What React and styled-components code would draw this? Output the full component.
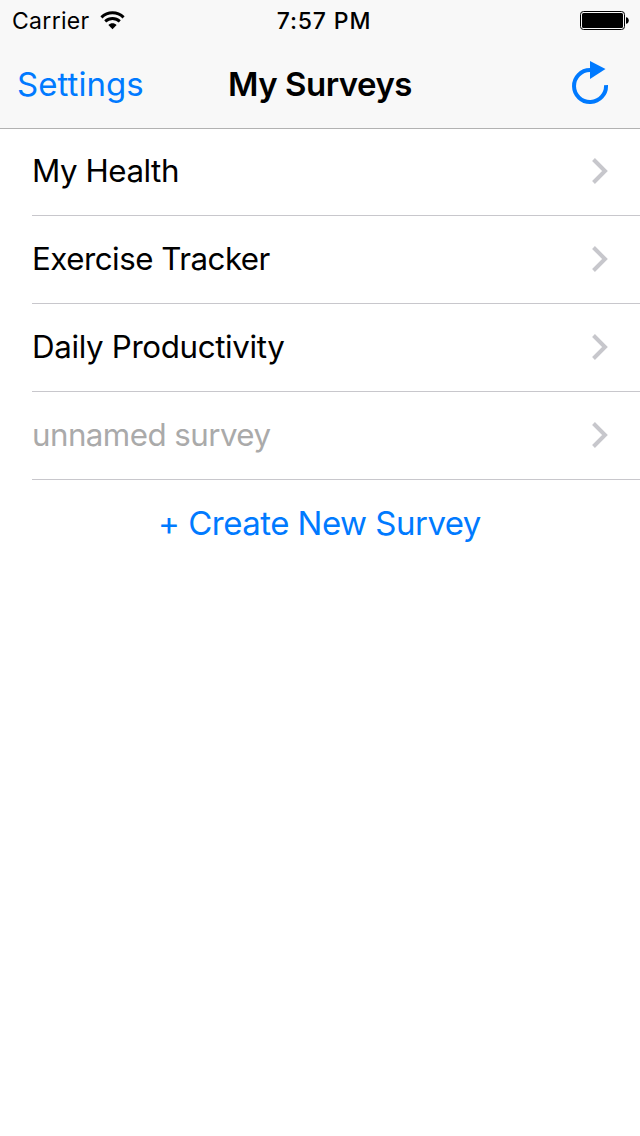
import React from "react";
import styled, { createGlobalStyle } from "styled-components";

const GlobalStyle = createGlobalStyle`
  * { box-sizing: border-box; }
  body {
    margin: 0;
    background: #fff;
    color: #000;
    font-family: Inter, "Liberation Sans", sans-serif;
    font-feature-settings: "calt" 0;
  }
`;

const Screen = styled.div`
  width: 640px;
  height: 1136px;
  background: #fff;
  overflow: hidden;
`;

const Header = styled.header`
  height: 128px;
  background: #f8f8f8;
  box-shadow: 0 1px 0 #b2b2b2;
`;

const StatusBar = styled.div`
  display: grid;
  grid-template-columns: 1fr auto 1fr;
  align-items: center;
  height: 40px;
  padding: 0 11px 0 12px;
`;

const Carrier = styled.div`
  display: flex;
  align-items: center;
  gap: 10px;
  font-size: 23px;
  line-height: 38px;
  letter-spacing: 0.3px;
  padding-top: 2px;
`;

const Clock = styled.div`
  font-size: 23px;
  font-weight: 500;
  line-height: 38px;
  letter-spacing: 0.85px;
  padding: 2px 0 0 7px;
`;

const BatterySlot = styled.div`
  display: flex;
  justify-content: flex-end;
  padding-top: 1px;
`;

const NavBar = styled.nav`
  display: grid;
  grid-template-columns: 1fr auto 1fr;
  align-items: center;
  height: 88px;
  padding: 0 30px 0 17px;
`;

const NavButton = styled.button`
  justify-self: ${(p) => (p.$end ? "end" : "start")};
  display: flex;
  padding: ${(p) => (p.$end ? "0 0 2px" : "0 0 1px")};
  border: 0;
  background: none;
  color: #007aff;
  font: inherit;
  font-size: 33px;
  line-height: 44px;
  letter-spacing: 0.05px;
`;

const Title = styled.h1`
  margin: 0;
  padding: 0 0 1px 13px;
  font-size: 33px;
  font-weight: 600;
  line-height: 44px;
  letter-spacing: -0.5px;
`;

const List = styled.ul`
  margin: 0;
  padding: 0 0 0 32px;
  list-style: none;
`;

const Row = styled.li`
  display: flex;
  align-items: center;
  justify-content: space-between;
  height: 88px;
  padding-right: 31px;
  border-bottom: 1px solid #c8c7cc;
  color: ${(p) => (p.$muted ? "#aaa" : "#000")};
  font-size: 31.3px;
  line-height: 40px;
  letter-spacing: ${(p) => p.$tracking}px;
`;

const SurveyName = styled.span`
  padding-bottom: 2px;
`;

const CreateButton = styled.button`
  display: block;
  width: 100%;
  height: 88px;
  padding: 0 1px 2px 0;
  border: 0;
  background: none;
  color: #007aff;
  font: inherit;
  font-size: 33px;
  letter-spacing: -0.52px;
`;

const surveys = [
  { name: "My Health", tracking: -0.45 },
  { name: "Exercise Tracker", tracking: -0.5 },
  { name: "Daily Productivity", tracking: -0.35 },
  { name: "unnamed survey", tracking: -0.55, muted: true },
];

const WifiIcon = () => (
  <svg width="25" height="21" viewBox="0 0 25 21" fill="none" stroke="#000">
    <path d="M1.4 6.3C7.8 .3 17.2 .3 23.6 6.3" strokeWidth="3" />
    <path d="M5.2 10.4C9.4 6.5 15.6 6.5 19.8 10.4" strokeWidth="2.8" />
    <path d="M8.4 14C10.7 11.5 14.3 11.5 16.6 14L12.5 18.2Z" fill="#000" stroke="none" />
  </svg>
);

const BatteryIcon = () => (
  <svg width="49" height="20" viewBox="0 0 49 20">
    <rect x="0.5" y="0.5" width="44" height="18" rx="3" fill="none" stroke="#000" />
    <rect x="2" y="2" width="41" height="15" rx="1.5" />
    <path d="M46 6.2C49.7 6.5 49.7 12.5 46 12.8Z" />
  </svg>
);

const RefreshIcon = () => (
  <svg width="38" height="46" viewBox="0 0 38 46">
    <path d="M34 25A16 16 0 1 1 18 10" fill="none" stroke="#007aff" strokeWidth="4" />
    <path d="M18 1L33.5 9L18 19Z" fill="#007aff" />
  </svg>
);

const Chevron = () => (
  <svg width="18" height="29" viewBox="0 0 18 29">
    <path d="M2.5 2.5L14 14L2.5 25.5" fill="none" stroke="#c7c7cc" strokeWidth="4" />
  </svg>
);

export default function App() {
  return (
    <Screen>
      <GlobalStyle />
      <Header>
        <StatusBar>
          <Carrier>
            <span>Carrier</span>
            <WifiIcon />
          </Carrier>
          <Clock>7:57 PM</Clock>
          <BatterySlot>
            <BatteryIcon />
          </BatterySlot>
        </StatusBar>
        <NavBar>
          <NavButton>Settings</NavButton>
          <Title>My Surveys</Title>
          <NavButton $end aria-label="Refresh">
            <RefreshIcon />
          </NavButton>
        </NavBar>
      </Header>
      <List>
        {surveys.map((s) => (
          <Row key={s.name} $muted={s.muted} $tracking={s.tracking}>
            <SurveyName>{s.name}</SurveyName>
            <Chevron />
          </Row>
        ))}
      </List>
      <CreateButton>+ Create New Survey</CreateButton>
    </Screen>
  );
}
